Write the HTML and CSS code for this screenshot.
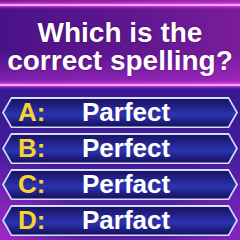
FILE: index.html
```html
<!DOCTYPE html>
<html>
<head>
<meta charset="utf-8">
<link rel="stylesheet" href="styles.css">
</head>
<body>
<div class="screen">
  <div class="cap"></div>
  <div class="glowline"></div>
  <div class="question">
    <p class="qtext">Which is the<br>correct spelling?</p>
  </div>
  <div class="glowline"></div>
  <div class="options">
    <div class="opt"><div class="opt-inner"><span class="letter">A:</span><span class="answer">Parfect</span></div></div>
    <div class="opt"><div class="opt-inner"><span class="letter">B:</span><span class="answer">Perfect</span></div></div>
    <div class="opt"><div class="opt-inner"><span class="letter">C:</span><span class="answer">Perfact</span></div></div>
    <div class="opt"><div class="opt-inner"><span class="letter">D:</span><span class="answer">Parfact</span></div></div>
  </div>
</div>
</body>
</html>
```
FILE: styles.css
```css
html, body {
  margin: 0;
  padding: 0;
}
body {
  width: 240px;
  height: 240px;
  overflow: hidden;
  font-family: "Liberation Sans", Arial, sans-serif;
}
.screen {
  width: 240px;
  height: 240px;
  display: flex;
  flex-direction: column;
  background:
    radial-gradient(ellipse 80px 90px at 0% 100%, rgba(170, 40, 200, 0.9), rgba(170, 40, 200, 0) 100%),
    radial-gradient(ellipse 80px 90px at 100% 100%, rgba(150, 40, 200, 0.7), rgba(150, 40, 200, 0) 100%),
    linear-gradient(180deg, #3a1688 0%, #3c1a94 50%, #5a20a8 100%);
}
.cap {
  height: 4px;
  background: linear-gradient(90deg, #7a1a96, #9a26b0);
}
.glowline {
  height: 2px;
  background: #ff9cff;
  box-shadow: 0 0 3px 1px rgba(255, 90, 255, 0.8);
  position: relative;
  z-index: 1;
}
.question {
  height: 78px;
  display: flex;
  align-items: center;
  justify-content: center;
  background:
    linear-gradient(180deg, rgba(0,0,0,0) 60%, rgba(190, 50, 220, 0.55) 100%),
    linear-gradient(90deg, #4a1288 0%, #5e168f 50%, #7a1c9c 100%);
}
.qtext {
  margin: 3px 0 0 0;
  color: #ffffff;
  font-weight: bold;
  font-size: 28px;
  line-height: 28px;
  text-align: center;
  text-shadow: 0 0 2px rgba(40, 0, 60, 0.6);
}
.options {
  margin-top: 11px;
  padding: 0 2px;
  display: flex;
  flex-direction: column;
  gap: 5px;
}
.opt {
  height: 31px;
  background: #cfe0ff;
  clip-path: polygon(9px 0, calc(100% - 9px) 0, 100% 50%, calc(100% - 9px) 100%, 9px 100%, 0 50%);
  padding: 1.5px 2px;
  box-sizing: border-box;
}
.opt-inner {
  height: 100%;
  clip-path: polygon(8px 0, calc(100% - 8px) 0, 100% 50%, calc(100% - 8px) 100%, 8px 100%, 0 50%);
  background: linear-gradient(180deg, #1a1260 0%, #24238e 30%, #2c34b0 55%, #1e1a78 85%, #16105a 100%);
  display: flex;
  align-items: center;
  font-weight: bold;
  font-size: 26px;
}
.letter {
  width: 64px;
  padding-left: 14px;
  color: #f8d42c;
}
.answer {
  color: #ffffff;
}
```
